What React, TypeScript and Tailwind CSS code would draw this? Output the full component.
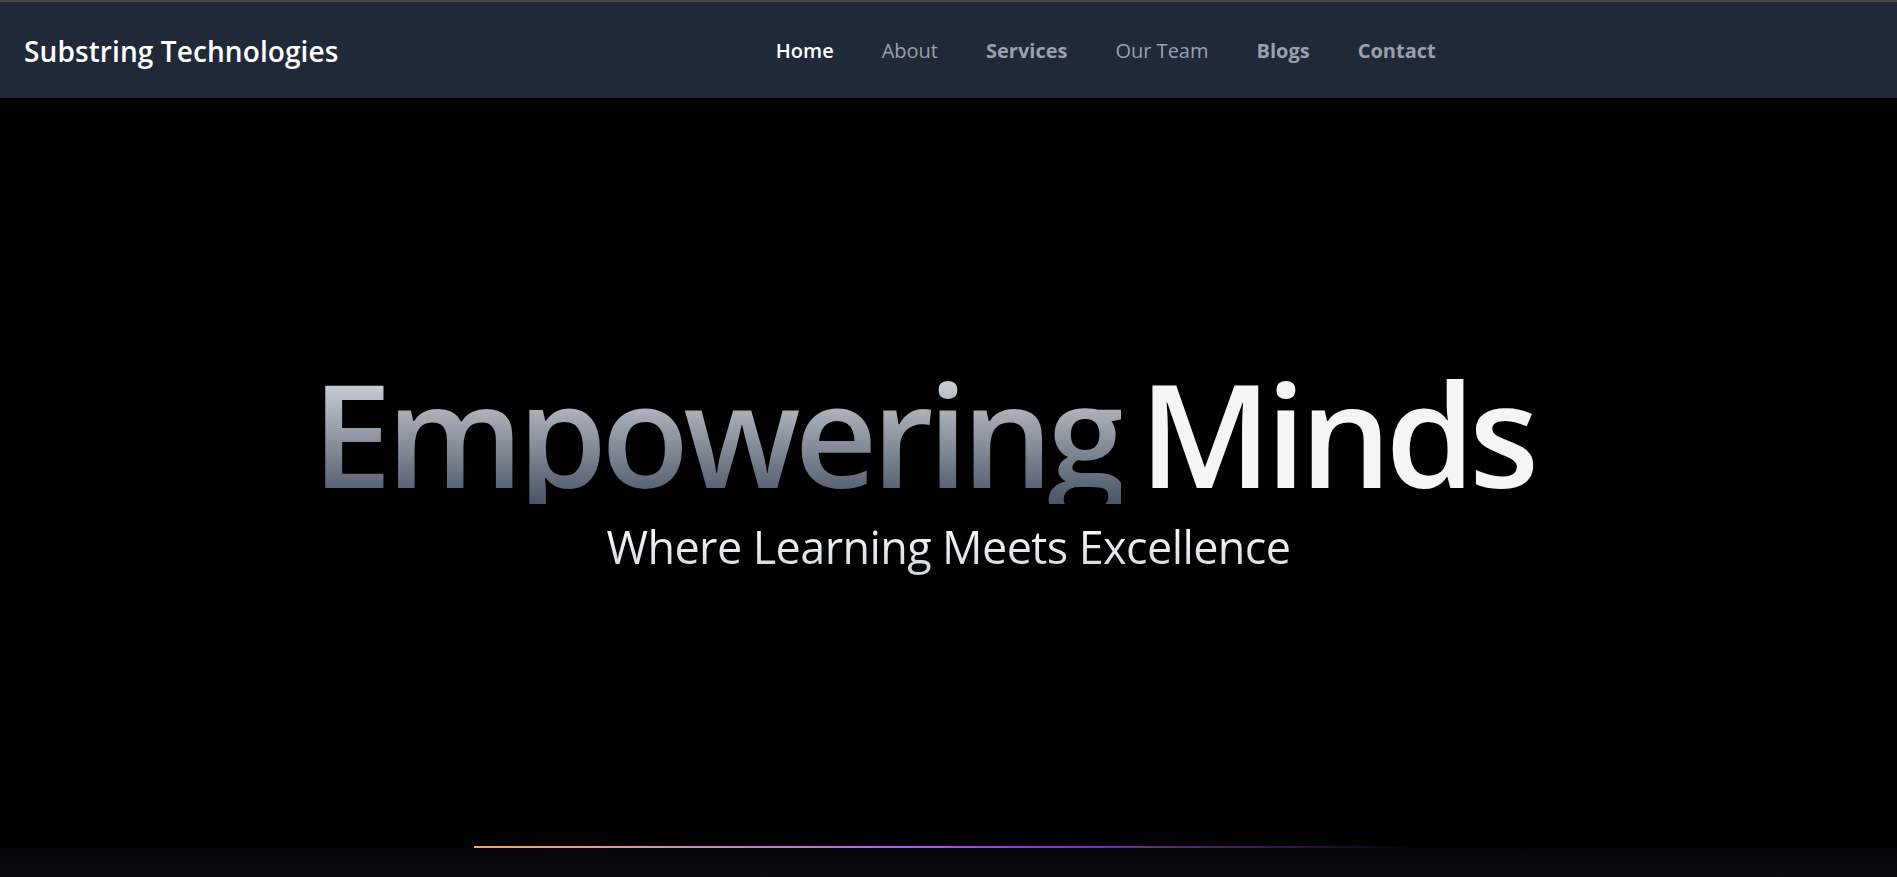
export default function App() {
  const links = [
    { label: "Home", cls: "font-semibold text-white" },
    { label: "About", cls: "font-normal text-gray-400" },
    { label: "Services", cls: "font-bold text-gray-400" },
    { label: "Our Team", cls: "font-normal text-gray-400" },
    { label: "Blogs", cls: "font-bold text-gray-400" },
    { label: "Contact", cls: "font-bold text-gray-400" },
  ];

  return (
    <div
      className="min-h-screen bg-black flex flex-col"
      style={{ fontFamily: '"Open Sans", "Noto Sans", sans-serif' }}
    >
      {/* Navbar */}
      <nav className="h-[98px] border-t-2 border-[#464646] bg-[#1f2937] flex items-center px-6 pt-[2px]">
        <a href="#" className="text-[28px] font-semibold text-white tracking-[0.1px]">
          Substring Technologies
        </a>
        <ul className="flex-1 flex justify-center gap-12">
          {links.map((l) => (
            <li key={l.label}>
              <a href={`#${l.label.toLowerCase()}`} className={`text-[20px] ${l.cls}`}>
                {l.label}
              </a>
            </li>
          ))}
        </ul>
      </nav>

      {/* Hero */}
      <section className="relative flex-1 h-[779px] flex flex-col items-center">
        <div className="flex flex-col items-center pt-[262px]">
          <h1 className="mr-[52px] flex items-baseline gap-[18px] text-[144px] font-semibold leading-none tracking-[-6px]">
            <span className="bg-gradient-to-b from-gray-200 to-gray-600 bg-clip-text text-transparent">
              Empowering
            </span>
            <span className="text-neutral-100">Minds</span>
          </h1>
          <p className="mt-[15px] text-[45px] leading-tight tracking-[-0.6px] bg-gradient-to-b from-white to-gray-300 bg-clip-text text-transparent">
            Where Learning Meets Excellence
          </p>
        </div>

        <div className="mt-auto w-full">
          <div className="ml-[25%] w-1/2 h-[2px] bg-gradient-to-r from-[#f9a83c] via-purple-500 to-transparent" />
          <div className="h-[29px] bg-gradient-to-b from-[#06060a] to-[#0b0b11]" />
        </div>
      </section>
    </div>
  );
}
